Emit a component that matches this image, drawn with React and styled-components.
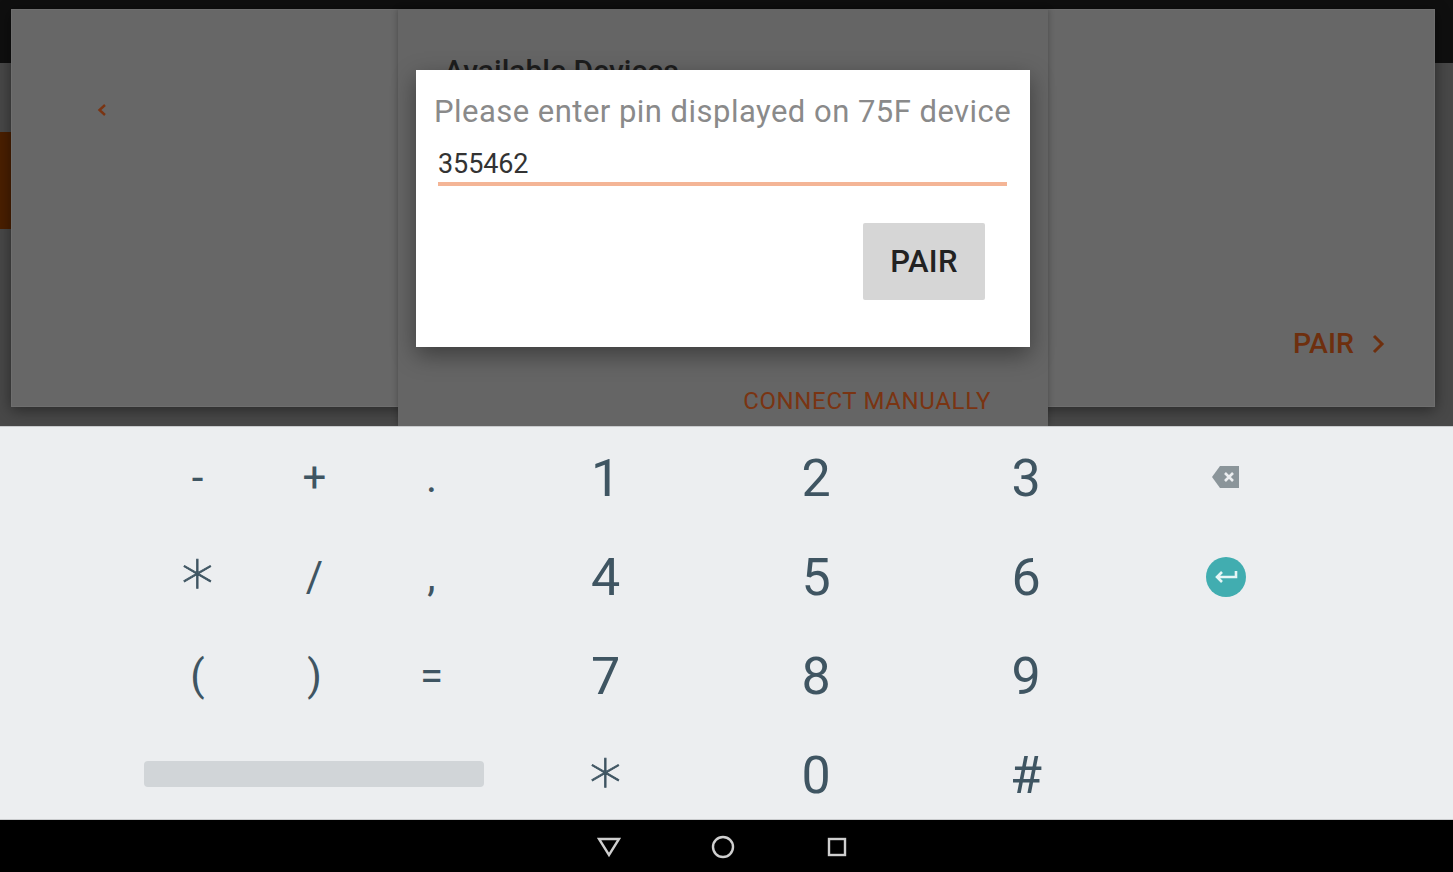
import React from "react";
import styled, {createGlobalStyle} from "styled-components";

const GlobalStyle = createGlobalStyle`
	html, body {
		margin: 0;
		padding: 0;
		background: #000;
	}
	body {
		font-family: Roboto, "Liberation Sans", sans-serif;
	}
`;

const Screen = styled.div`
	width: 1453px;
	height: 872px;
	display: flex;
	flex-direction: column;
	overflow: hidden;
`;

const Stage = styled.div`
	position: relative;
	height: 426px;
	flex: none;
	background: #484848;
	overflow: hidden;
`;

const StatusBar = styled.div`
	position: absolute;
	top: 0;
	left: 0;
	right: 0;
	height: 63px;
	background: #0f0f0f;
`;

const AccentTab = styled.div`
	position: absolute;
	top: 132px;
	left: 0;
	width: 11px;
	height: 97px;
	background: #4a1f00;
`;

const Wizard = styled.div`
	position: absolute;
	top: 9px;
	left: 11px;
	width: 1424px;
	height: 398px;
	background: #676767;
	box-shadow:
		inset 0 0 0 1px #6e6e6e,
		0 3px 14px rgba(0, 0, 0, 0.45);
`;

const BackChevron = styled.svg`
	position: absolute;
	top: 94px;
	left: 85px;
	width: 12px;
	height: 14px;
`;

const WizardPair = styled.div`
	position: absolute;
	top: 320px;
	left: 1282px;
	display: flex;
	align-items: center;
	gap: 16px;
	font-size: 28.5px;
	font-weight: 500;
	line-height: 30px;
	color: #6e2f0e;
`;

const DevicePanel = styled.div`
	position: absolute;
	top: 9px;
	left: 398px;
	width: 650px;
	height: 417px;
	background: #656565;
	box-shadow: 0 0 6px rgba(0, 0, 0, 0.3);
`;

const PanelTitle = styled.div`
	position: absolute;
	top: 45px;
	left: 46px;
	font-size: 30px;
	line-height: 33px;
	font-weight: 500;
	color: #1d1d1d;
`;

const ConnectLink = styled.div`
	position: absolute;
	top: 378px;
	right: 57px;
	font-size: 24px;
	line-height: 28px;
	letter-spacing: 0.65px;
	color: #7a3412;
	white-space: nowrap;
`;

const PinDialog = styled.div`
	position: absolute;
	top: 70px;
	left: 416px;
	width: 614px;
	height: 277px;
	box-sizing: border-box;
	padding: 25px 19px 0 18px;
	display: flex;
	flex-direction: column;
	background: #fff;
	box-shadow: 0 8px 22px rgba(0, 0, 0, 0.4);
`;

const DialogLabel = styled.div`
	font-size: 31px;
	line-height: 34px;
	letter-spacing: 0.47px;
	color: #8a8a8a;
	white-space: nowrap;
`;

const PinField = styled.div`
	margin: 19px 4px 0;
	height: 38px;
	box-sizing: border-box;
	padding-top: 1px;
	border-bottom: 4px solid #f4b596;
	font-size: 27px;
	line-height: 30px;
	letter-spacing: -0.1px;
	color: #333;
`;

const DialogActions = styled.div`
	display: flex;
	justify-content: flex-end;
	margin-top: 37px;
	padding-right: 26px;
`;

const DialogButton = styled.div`
	width: 122px;
	height: 77px;
	display: flex;
	align-items: center;
	justify-content: center;
	background: #d6d6d6;
	border-radius: 2px;
	font-size: 31px;
	font-weight: 500;
	letter-spacing: 0.3px;
	color: #222;
`;

const Keyboard = styled.div`
	height: 394px;
	flex: none;
	box-sizing: border-box;
	padding-left: 139px;
	display: grid;
	grid-template-columns: 117px 117px 117px 231px 190px 230px 170px;
	grid-template-rows: repeat(4, 99px);
	background: #eceef0;
	border-top: 1px solid #c9cbcd;
	border-bottom: 1px solid #c9cbcd;
`;

const Key = styled.div`
	display: flex;
	align-items: center;
	justify-content: center;
	font-size: 42px;
	color: #3f5562;
	padding-top: 2px;
`;

const DigitKey = styled(Key)`
	font-size: 52px;
	padding-top: 4px;
`;

const StarGlyph = styled.span`
	font-family: "DejaVu Sans", sans-serif;
	font-size: 64px;
	font-weight: 200;
	line-height: 1;
	margin-bottom: 9px;
	-webkit-text-stroke: 0.8px #3f5562;
`;

const IconKey = styled.div`
	display: flex;
	align-items: center;
	justify-content: center;
	padding-top: ${(p) => p.$nudge || 0}px;
`;

const SpaceKey = styled.div`
	grid-column: 1 / span 3;
	display: flex;
	align-items: center;
	justify-content: center;
`;

const SpaceBar = styled.div`
	width: 340px;
	height: 26px;
	margin-left: -1px;
	background: #d1d5d8;
	border-radius: 4px;
`;

const EnterBadge = styled.div`
	width: 40px;
	height: 40px;
	display: flex;
	align-items: center;
	justify-content: center;
	border-radius: 50%;
	background: #41adb0;
`;

const NavBar = styled.div`
	height: 52px;
	flex: none;
	box-sizing: border-box;
	padding: 2px 8px 0 0;
	display: flex;
	align-items: center;
	justify-content: center;
	gap: 90px;
	background: #000;
`;

const NavIcon = styled.svg`
	width: 24px;
	height: 24px;
	fill: none;
	stroke: #cfcfcf;
	stroke-width: 2.4;
`;

const symbolRows = [
	["-", "+", "."],
	["∗", "/", ","],
	["(", ")", "="],
];

const digitRows = [
	["1", "2", "3"],
	["4", "5", "6"],
	["7", "8", "9"],
];

const renderRow = (row) => (
	<>
		{symbolRows[row].map((s) => (
			<Key key={s}>{s === "∗" ? <StarGlyph>{s}</StarGlyph> : s}</Key>
		))}
		{digitRows[row].map((d) => (
			<DigitKey key={d}>{d}</DigitKey>
		))}
	</>
);

export default function App() {
	return (
		<>
			<GlobalStyle />
			<Screen>
				<Stage>
					<StatusBar />
					<AccentTab />
					<Wizard>
						<BackChevron viewBox="0 0 12 14">
							<path d="M9 2 L3.5 7 L9 12" fill="none" stroke="#7a3412" strokeWidth="2.4" />
						</BackChevron>
						<WizardPair>
							PAIR
							<svg width="16" height="22" viewBox="0 0 16 22">
								<path d="M4 3 L12 11 L4 19" fill="none" stroke="#6e2f0e" strokeWidth="3" />
							</svg>
						</WizardPair>
					</Wizard>
					<DevicePanel>
						<PanelTitle>Available Devices</PanelTitle>
						<ConnectLink>CONNECT MANUALLY</ConnectLink>
					</DevicePanel>
					<PinDialog>
						<DialogLabel>Please enter pin displayed on 75F device</DialogLabel>
						<PinField>355462</PinField>
						<DialogActions>
							<DialogButton>PAIR</DialogButton>
						</DialogActions>
					</PinDialog>
				</Stage>
				<Keyboard>
					{renderRow(0)}
					<IconKey>
						<svg width="30" height="24" viewBox="0 0 30 24">
							<path d="M9 1 H28 V23 H9 L1 12 Z" fill="#8b959a" />
							<path d="M14 8 L22 16 M22 8 L14 16" stroke="#eceef0" strokeWidth="2.6" />
						</svg>
					</IconKey>
					{renderRow(1)}
					<IconKey $nudge={2}>
						<EnterBadge>
							<svg width="26" height="18" viewBox="0 0 26 18">
								<path
									d="M23 3 V9 H4 M9 4 L4 9 L9 14"
									fill="none"
									stroke="#e6f6f6"
									strokeWidth="2.6"
								/>
							</svg>
						</EnterBadge>
					</IconKey>
					{renderRow(2)}
					<IconKey />
					<SpaceKey>
						<SpaceBar />
					</SpaceKey>
					<DigitKey>
						<StarGlyph>∗</StarGlyph>
					</DigitKey>
					<DigitKey>0</DigitKey>
					<DigitKey>#</DigitKey>
					<IconKey />
				</Keyboard>
				<NavBar>
					<NavIcon viewBox="0 0 24 24">
						<path d="M2 4 H22 L12 20 Z" />
					</NavIcon>
					<NavIcon viewBox="0 0 24 24">
						<circle cx="12" cy="12" r="10" />
					</NavIcon>
					<NavIcon viewBox="0 0 24 24">
						<rect x="4" y="4" width="16" height="16" />
					</NavIcon>
				</NavBar>
			</Screen>
		</>
	);
}
